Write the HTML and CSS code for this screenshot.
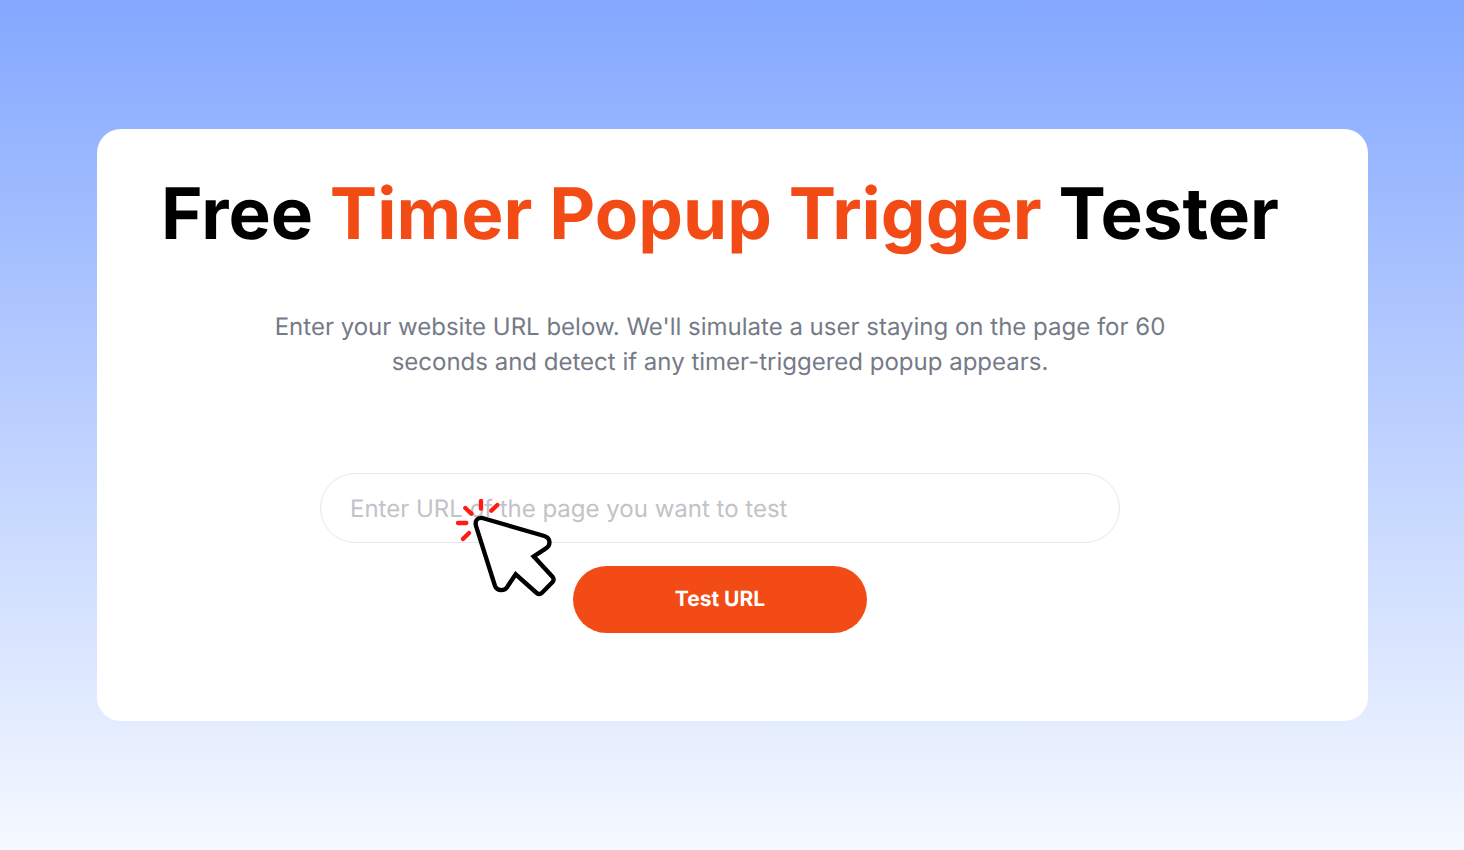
FILE: index.html
```html
<!DOCTYPE html>
<html lang="en">
<head>
    <meta charset="UTF-8">
    <meta name="viewport" content="width=device-width, initial-scale=1.0">

    <title>Free Timer Popup Trigger Tester</title>
    <link rel="stylesheet" href="styles.css">
</head>
<body>
    <main class="card">
        <h1 class="title">Free <span class="highlight">Timer Popup Trigger</span> Tester</h1>
        <p class="intro">Enter your website URL below. We'll simulate a user staying on the page for 60 seconds and detect if any timer-triggered popup appears.</p>

        <form class="tester">
            <div class="field">
                <input class="url-input" type="url" id="url" aria-label="Page URL" placeholder="Enter URL of the page you want to test">
                <svg class="cursor" viewBox="45 36 306 303" aria-hidden="true">
                    <g stroke="#ff1a12" stroke-width="13" stroke-linecap="round">
                        <path d="M123 48V71M76 69L94 86M172 60L154 77M54 114H79M87 144L69 162"/>
                    </g>
                    <path d="M127 99L313 153C332 159 333 180 318 190L281 214L338 276Q344 284 337 292L306 323Q298 331 290 324L227 268L204 302C195 320 171 319 165 303L108 123C104 107 112 97 127 99Z" fill="#fff" stroke="#000" stroke-width="13"/>
                </svg>
            </div>
            <button class="submit" type="submit">Test URL</button>
        </form>
    </main>
</body>
</html>
```
FILE: styles.css
```css
* {
    box-sizing: border-box;
}

body {
    margin: 0;
    min-height: 100vh;
    padding: 24px 96px 24px 97px;
    display: flex;
    align-items: center;
    background: linear-gradient(#84a8ff, #f5f9ff);
    font-family: Inter, sans-serif;
    text-rendering: geometricPrecision;
}

.card {
    flex: 1;
    padding: 42px 88px 88px 63px;
    background-color: #fff;
    border-radius: 24px;
    text-align: center;
}

.title {
    margin: 0;
    font-size: 71px;
    line-height: 87px;
    font-weight: 700;
    color: #000;
}

.highlight {
    color: #f34b16;
}

.intro {
    max-width: 900px;
    margin: 51px auto 94px;
    font-size: 24px;
    line-height: 35px;
    color: #757a88;
}

.tester {
    display: flex;
    flex-direction: column;
    align-items: center;
    gap: 23px;
}

.field {
    position: relative;
    width: 100%;
    max-width: 800px;
}

.url-input {
    display: block;
    width: 100%;
    height: 70px;
    padding: 0 29px;
    border: 1px solid #e8e8ec;
    border-radius: 35px;
    background-color: #fff;
    font-family: inherit;
    font-size: 24px;
    text-rendering: inherit;
}

.url-input::placeholder {
    color: #c2c3c8;
}

/* pointer drawn over the input */
.cursor {
    position: absolute;
    left: 135px;
    top: 24px;
    width: 102px;
    height: 101px;
    pointer-events: none;
}

.submit {
    width: 294px;
    height: 67px;
    border: none;
    border-radius: 34px;
    background-color: #f34b16;
    color: #fff;
    font-family: inherit;
    font-size: 21px;
    font-weight: 700;
    text-rendering: inherit;
    cursor: pointer;
}
```
